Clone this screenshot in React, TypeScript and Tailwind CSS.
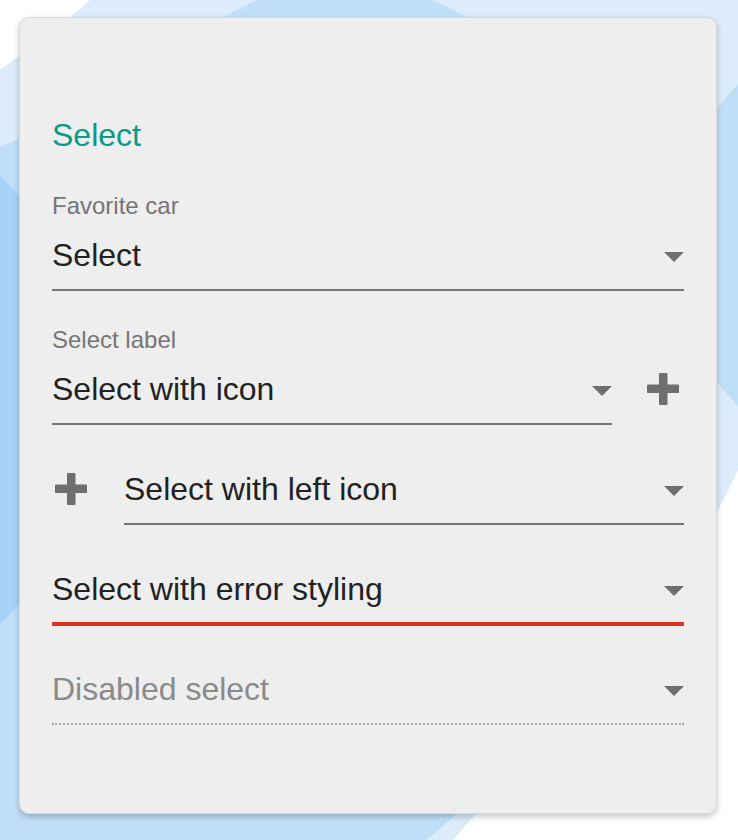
import React from "react";

const font = { fontFamily: "'Liberation Sans', Arial, sans-serif" };

function Arrow() {
  return (
    <svg width="20" height="10" viewBox="0 0 20 10" className="shrink-0 mt-[3px]">
      <polygon points="0,0 20,0 10,10" fill="#6f6f6f" />
    </svg>
  );
}

function Plus() {
  return (
    <svg width="32" height="32" viewBox="0 0 32 32" className="shrink-0">
      <rect x="12" y="0" width="8.5" height="32" rx="1" fill="#6f6f6f" />
      <rect x="0" y="11.5" width="32" height="8.5" rx="1" fill="#6f6f6f" />
    </svg>
  );
}

function Field({
  text,
  variant = "normal",
}: {
  text: string;
  variant?: "normal" | "error" | "disabled";
}) {
  const line =
    variant === "error"
      ? "pb-[13px] border-b-4 border-[#e0321f]"
      : variant === "disabled"
        ? "pb-[14px] border-b-2 border-dotted border-[#a9a9a9]"
        : "pb-[14px] border-b-2 border-[#757575]";
  return (
    <div className={`flex items-center justify-between ${line}`}>
      <span
        className={`text-[32px] leading-[40px] ${
          variant === "disabled" ? "text-[#8a8a8a]" : "text-[#222222]"
        }`}
      >
        {text}
      </span>
      <Arrow />
    </div>
  );
}

function Label({ children }: { children: React.ReactNode }) {
  return <div className="text-[24px] leading-[28px] text-[#757575] mb-[15px]">{children}</div>;
}

export default function App() {
  return (
    <div className="relative w-full h-[840px] overflow-hidden bg-white" style={font}>
      {/* background blobs */}
      <svg className="absolute inset-0" width="738" height="840" viewBox="0 0 738 840">
        <path
          d="M90,0 L738,0 L738,470 C660,640 520,760 453,840 L0,840 L0,70 C30,48 62,26 90,0 Z"
          fill="#dcecfb"
        />
        <circle cx="345" cy="215" r="232" fill="#bfdff8" />
        <circle cx="905" cy="245" r="232" fill="#bfdff8" />
        <circle cx="170" cy="520" r="410" fill="#bfdff8" />
        <circle cx="-200" cy="400" r="300" fill="#a8d2f5" />
      </svg>

      <div className="relative ml-[19px] mt-[17px] w-[698px] h-[797px] rounded-[10px] bg-[#eeeeee] border border-[#d8d8d8] shadow-[0_3px_6px_rgba(0,0,0,0.22)] px-[32px] pt-[97px]">
        <h2 className="text-[32px] leading-[40px] text-[#0a9a8a]">Select</h2>

        <div className="mt-[37px]">
          <Label>Favorite car</Label>
          <Field text="Select" />
        </div>

        <div className="mt-[35px]">
          <Label>Select label</Label>
          <div className="flex items-start">
            <div className="flex-1">
              <Field text="Select with icon" />
            </div>
            <div className="w-[72px] h-[40px] flex items-center justify-end pr-[5px]">
              <Plus />
            </div>
          </div>
        </div>

        <div className="mt-[44px] flex items-start">
          <div className="w-[72px] h-[40px] flex items-center pl-[3px]">
            <Plus />
          </div>
          <div className="flex-1">
            <Field text="Select with left icon" />
          </div>
        </div>

        <div className="mt-[44px]">
          <Field text="Select with error styling" variant="error" />
        </div>

        <div className="mt-[43px]">
          <Field text="Disabled select" variant="disabled" />
        </div>
      </div>
    </div>
  );
}
